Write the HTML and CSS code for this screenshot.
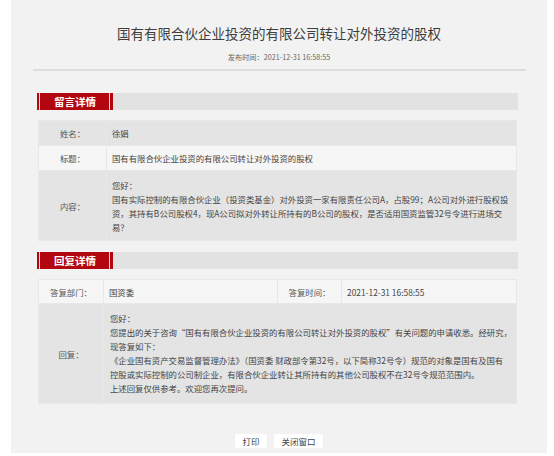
FILE: index.html
```html
<!DOCTYPE html>
<html lang="zh-CN">
<head>
<meta charset="utf-8">
<title>国有有限合伙企业投资的有限公司转让对外投资的股权</title>
<link rel="stylesheet" href="styles.css">
</head>
<body>
<div class="panel">
  <h1 class="title">国有有限合伙企业投资的有限公司转让对外投资的股权</h1>
  <div class="pubtime"><span class="pub-label">发布时间：</span>2021-12-31 16:58:55</div>
  <div class="rule"></div>

  <section class="section first">
    <div class="sec-bar"><span class="sec-tab">留言详情</span></div>
    <table class="info t1">
      <colgroup><col class="c-lab1"><col></colgroup>
      <tr class="dark">
        <td class="lab">姓名：</td>
        <td class="val">徐娟</td>
      </tr>
      <tr class="light">
        <td class="lab">标题：</td>
        <td class="val">国有有限合伙企业投资的有限公司转让对外投资的股权</td>
      </tr>
      <tr class="dark">
        <td class="lab">内容：</td>
        <td class="val multi">您好：<br>国有实际控制的有限合伙企业（投资类基金）对外投资一家有限责任公司A，占股99；A公司对外进行股权投<br>资，其持有B公司股权4，现A公司拟对外转让所持有的B公司的股权，是否适用国资监管32号令进行进场交<br>易？</td>
      </tr>
    </table>
  </section>

  <section class="section second">
    <div class="sec-bar"><span class="sec-tab">回复详情</span></div>
    <table class="info t2">
      <colgroup><col class="c-lab2"><col class="c-val2"><col class="c-lab3"><col></colgroup>
      <tr class="light">
        <td class="lab">答复部门：</td>
        <td class="val">国资委</td>
        <td class="lab">答复时间：</td>
        <td class="val">2021-12-31 16:58:55</td>
      </tr>
      <tr class="dark">
        <td class="lab">回复：</td>
        <td class="val multi reply" colspan="3">您好：<br>您提出的关于咨询“国有有限合伙企业投资的有限公司转让对外投资的股权”有关问题的申请收悉。经研究，<br>现答复如下：<br>《企业国有资产交易监督管理办法》（国资委 财政部令第32号，以下简称32号令）规范的对象是国有及国有<br>控股或实际控制的公司制企业，有限合伙企业转让其所持有的其他公司股权不在32号令规范范围内。<br>上述回复仅供参考。欢迎您再次提问。</td>
      </tr>
    </table>
  </section>

  <div class="actions">
    <button class="btn" type="button">打印</button>
    <button class="btn" type="button">关闭窗口</button>
  </div>
</div>
</body>
</html>
```

FILE: styles.css
```css
html, body {
  margin: 0;
  padding: 0;
  background: #ffffff;
}

body {
  font-family: "Noto Sans CJK SC", "Noto Sans", sans-serif;
  color: #444444;
}

.panel {
  box-sizing: border-box;
  margin-left: 11px;
  width: 536px;
  height: 453px;
  background: #f2f2f2;
  padding-top: 24px;
  display: flex;
  flex-direction: column;
}

.title {
  margin: 0;
  font-size: 13.5px;
  line-height: 18px;
  font-weight: normal;
  color: #3d3d3d;
  text-align: center;
}

.pubtime {
  margin-top: 10px;
  font-size: 7.2px;
  line-height: 10px;
  color: #666666;
  text-align: center;
}

.rule {
  margin: 7px 21px 0 22px;
  height: 2px;
  background: #dddddd;
}

.section {
  margin-left: 26px;
  width: 481px;
}

.section.first {
  margin-top: 22px;
}

.section.second {
  margin-top: 11px;
}

.sec-bar {
  height: 17px;
  background: #e2e2e2;
  display: flex;
}

.sec-tab {
  width: 76px;
  height: 17px;
  line-height: 17px;
  background: #b3070f;
  box-shadow: inset 2px 0 0 #b3070f, inset 3px 0 0 #f4d4d4, inset -3px 0 0 #b3070f, inset -4px 0 0 #f4d4d4;
  color: #ffffff;
  font-size: 10.5px;
  font-weight: bold;
  text-align: center;
}

.info {
  margin: 10px 1px 0 1px;
  width: 479px;
  border-collapse: collapse;
  table-layout: fixed;
  font-size: 8.4px;
  line-height: 14px;
}

.c-lab1 { width: 68px; }
.c-lab2 { width: 65px; }
.c-val2 { width: 174px; }
.c-lab3 { width: 64px; }

.info td {
  border: 1px solid #e8e8e8;
  padding: 0 2px 0 5px;
  vertical-align: middle;
}

.info tr.dark td {
  background: #e4e4e4;
}

.info tr.light td {
  background: #f6f6f6;
}

.t1 tr td {
  height: 24px;
}

.info td.lab {
  text-align: center;
  color: #555555;
  padding: 0;
}

.info td.val {
  color: #444444;
}

.info td.multi {
  height: auto;
  padding-top: 7px;
  padding-bottom: 6px;
  white-space: nowrap;
  overflow: hidden;
}

.t2 tr td {
  height: 23px;
}

.info td.reply {
  padding-left: 6px;
  padding-bottom: 8px;
}

.actions {
  margin-top: 30px;
  display: flex;
  justify-content: center;
  gap: 7px;
}

.btn {
  font-family: inherit;
  font-size: 8.5px;
  line-height: 14px;
  height: 14px;
  padding: 0 7.5px;
  border: none;
  border-radius: 2px;
  background: #ffffff;
  color: #444444;
  cursor: pointer;
}
```
